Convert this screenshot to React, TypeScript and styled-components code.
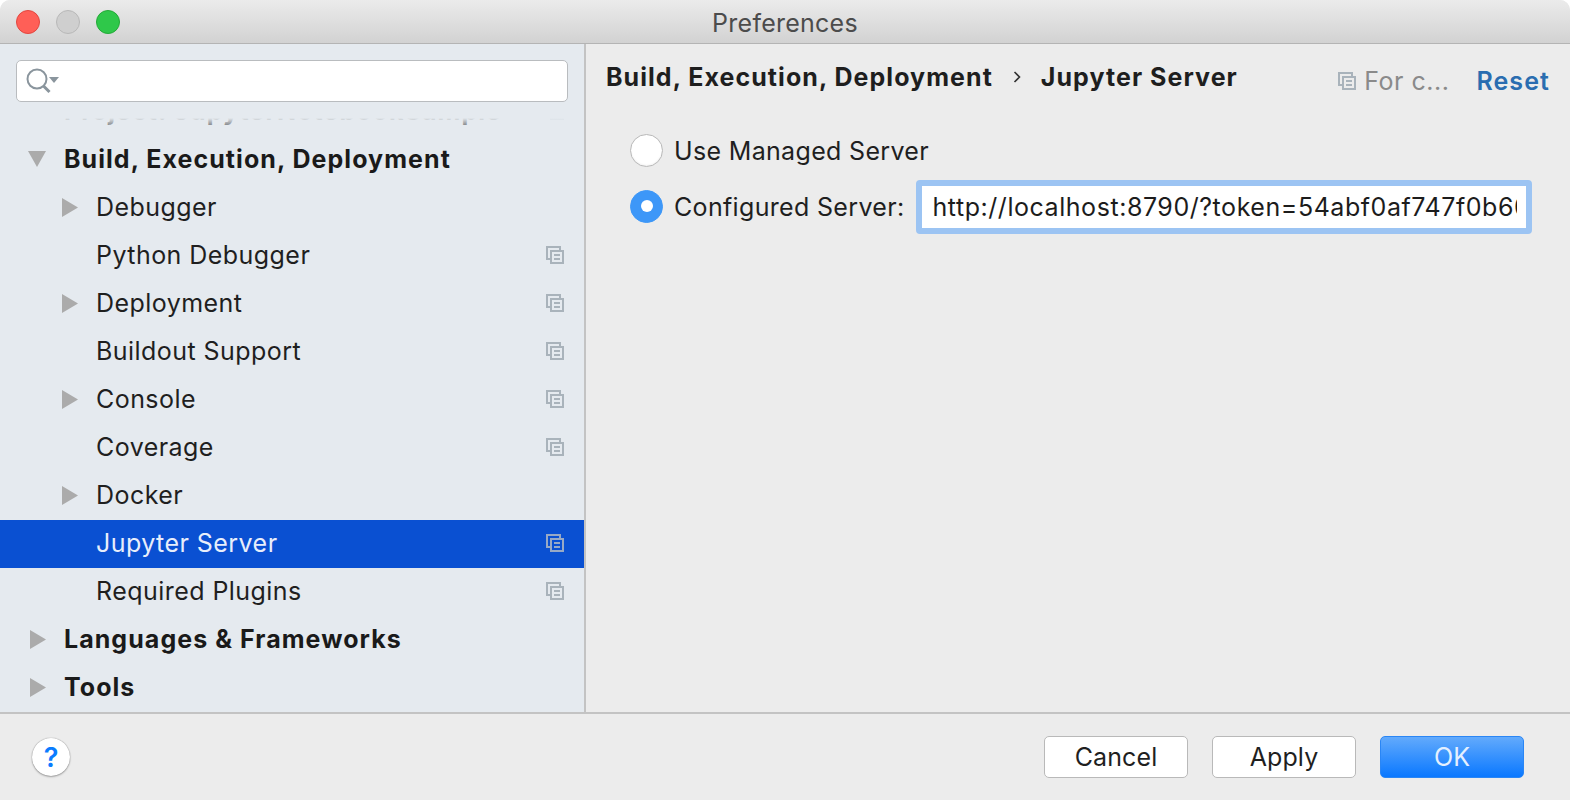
import React from "react";
import styled, { createGlobalStyle } from "styled-components";

const GlobalStyle = createGlobalStyle`
  html, body {
    margin: 0;
    padding: 0;
    background: #fff;
  }
  * {
    box-sizing: border-box;
  }
`;

const Window = styled.div`
  width: 1570px;
  height: 800px;
  display: flex;
  flex-direction: column;
  overflow: hidden;
  background: #ececec;
  border-radius: 10px 10px 0 0;
  color: #1c1c1c;
  font-family: Inter, "Liberation Sans", sans-serif;
`;

const TitleBar = styled.div`
  height: 44px;
  flex: none;
  display: flex;
  align-items: center;
  padding-left: 16px;
  gap: 16px;
  position: relative;
  background: linear-gradient(#ebebeb, #d2d2d2);
  border-bottom: 1px solid #b4b4b4;
`;

const Light = styled.span<{ $fill: string; $edge: string }>`
  width: 24px;
  height: 24px;
  margin-top: 1px;
  border-radius: 50%;
  background: ${(p) => p.$fill};
  border: 1px solid ${(p) => p.$edge};
`;

const Title = styled.div`
  position: absolute;
  left: 0;
  right: 0;
  top: 8px;
  text-align: center;
  font-size: 25px;
  line-height: 30px;
  letter-spacing: 0.25px;
  color: #4c4c4c;
`;

const Body = styled.div`
  flex: 1;
  min-height: 0;
  display: flex;
`;

const Sidebar = styled.div`
  width: 586px;
  flex: none;
  display: flex;
  flex-direction: column;
  background: #e5eaef;
  border-right: 2px solid #c3c3c3;
`;

const SearchWrap = styled.div`
  flex: none;
  height: 74px;
  padding: 16px 16px 0 16px;
`;

const SearchBox = styled.div`
  height: 42px;
  display: flex;
  align-items: center;
  padding-left: 9px;
  background: #fff;
  border: 1px solid #b9bcbf;
  border-radius: 5px;
`;

const Tree = styled.div`
  flex: 1;
  min-height: 0;
  overflow: hidden;
  position: relative;
`;

const TreeFade = styled.div`
  position: absolute;
  left: 0;
  right: 0;
  top: 0;
  height: 10px;
  background: linear-gradient(#e5eaef, rgba(229, 234, 239, 0.35));
`;

const TreeList = styled.div`
  margin-top: -30px;
`;

const Row = styled.div<{ $selected?: boolean; $level: number }>`
  height: 48px;
  display: flex;
  align-items: center;
  padding-left: ${(p) => (p.$level === 0 ? 30 : 62)}px;
  padding-right: 20px;
  padding-bottom: 2px;
  background: ${(p) => (p.$selected ? "#0a50d2" : "transparent")};
  color: ${(p) => (p.$selected ? "#e8eefb" : "#1f1f1f")};
`;

const ArrowSlot = styled.span<{ $down?: boolean }>`
  width: 34px;
  flex: none;
  display: flex;
  align-items: center;
  margin-left: ${(p) => (p.$down ? -2 : 0)}px;
  margin-right: ${(p) => (p.$down ? 2 : 0)}px;
`;

const RowLabel = styled.span<{ $bold?: boolean }>`
  flex: 1;
  font-size: 25px;
  line-height: 30px;
  letter-spacing: ${(p) => (p.$bold ? "1.05px" : "0.45px")};
  font-weight: ${(p) => (p.$bold ? 700 : 400)};
  color: ${(p) => (p.$bold ? "#1a1a1a" : "inherit")};
  white-space: nowrap;
`;

const Content = styled.div`
  flex: 1;
  min-width: 0;
  display: flex;
  flex-direction: column;
  padding: 0 20px 0 20px;
`;

const Header = styled.div`
  height: 74px;
  flex: none;
  display: flex;
  align-items: flex-start;
  padding-top: 18px;
`;

const Crumb = styled.span`
  font-size: 25px;
  line-height: 30px;
  font-weight: 700;
  letter-spacing: 1.05px;
  color: #1e1e1e;
  white-space: nowrap;
`;

const CrumbSep = styled.span`
  width: 48px;
  flex: none;
  display: flex;
  justify-content: center;
  padding-top: 9px;
`;

const HeaderSpacer = styled.div`
  flex: 1;
`;

const ScopeHint = styled.span`
  display: flex;
  align-items: center;
  gap: 8px;
  margin-top: 4px;
  font-size: 25px;
  line-height: 30px;
  letter-spacing: 0.5px;
  color: #8a8a8a;
  white-space: nowrap;
`;

const ResetLink = styled.span`
  margin-left: 27px;
  margin-top: 4px;
  font-size: 25px;
  line-height: 30px;
  font-weight: 600;
  letter-spacing: 1.1px;
  color: #2a6db0;
`;

const Options = styled.div`
  display: flex;
  flex-direction: column;
  padding-left: 24px;
  padding-top: 4px;
`;

const OptionRow = styled.div`
  height: 56px;
  display: flex;
  align-items: center;
  gap: 11px;
`;

const RadioCircle = styled.span<{ $checked?: boolean }>`
  width: 33px;
  height: 33px;
  flex: none;
  display: flex;
  align-items: center;
  justify-content: center;
  border-radius: 50%;
  background: ${(p) => (p.$checked ? "#3d97f8" : "#fff")};
  border: 1px solid ${(p) => (p.$checked ? "#3d97f8" : "#b8b8b8")};
  box-shadow: ${(p) => (p.$checked ? "none" : "inset 0 -1px 2px rgba(0,0,0,0.06)")};
`;

const RadioDot = styled.span`
  width: 12px;
  height: 12px;
  border-radius: 50%;
  background: #fff;
`;

const OptionLabel = styled.span`
  padding-top: 2px;
  font-size: 25px;
  line-height: 30px;
  letter-spacing: 0.33px;
  color: #1f1f1f;
  white-space: nowrap;
`;

const UrlField = styled.div`
  width: 616px;
  height: 54px;
  margin-top: 2px;
  margin-left: 1px;
  padding: 7px 9px 7px 10px;
  background: #fff;
  border: 6px solid #9cc4f3;
  border-radius: 4px;
  display: flex;
  align-items: center;
  overflow: hidden;
  font-size: 25px;
  line-height: 30px;
  letter-spacing: 0.55px;
  color: #1c1c1c;
  white-space: nowrap;
`;

const UrlClip = styled.div`
  overflow: hidden;
  width: 100%;
`;

const Footer = styled.div`
  height: 88px;
  flex: none;
  display: flex;
  align-items: center;
  padding: 0 46px 0 32px;
  background: #ececec;
  border-top: 2px solid #c3c3c3;
`;

const HelpButton = styled.div`
  width: 38px;
  height: 38px;
  display: flex;
  align-items: center;
  justify-content: center;
  border-radius: 50%;
  background: #fff;
  box-shadow: 0 0 1px rgba(0, 0, 0, 0.45), 0 1px 2px rgba(0, 0, 0, 0.3);
  color: #0a7cff;
  font-size: 27px;
  font-weight: 600;
`;

const FooterSpacer = styled.div`
  flex: 1;
`;

const Button = styled.div<{ $primary?: boolean }>`
  width: 144px;
  height: 42px;
  margin-left: 24px;
  display: flex;
  align-items: center;
  justify-content: center;
  border-radius: 5px;
  font-size: 25px;
  letter-spacing: 0.1px;
  background: ${(p) => (p.$primary ? "linear-gradient(#62aafc, #0a78ff)" : "#fff")};
  border: 1px solid ${(p) => (p.$primary ? "#2a86f5" : "#b9b9b9")};
  color: ${(p) => (p.$primary ? "#e4f0ff" : "#1f1f1f")};
`;

const TriangleRight = () => (
  <svg width="16" height="19" viewBox="0 0 16 19">
    <polygon points="0,0 16,9.5 0,19" fill="#ababab" />
  </svg>
);

const TriangleDown = () => (
  <svg width="18" height="16" viewBox="0 0 18 16">
    <polygon points="0,0 18,0 9,16" fill="#ababab" />
  </svg>
);

const CopyIcon = ({ color = "#a9b3bb" }: { color?: string }) => (
  <svg width="18" height="18" viewBox="0 0 18 18" fill="none" stroke={color} strokeWidth="2">
    <path d="M4 13H1V1h13v3" />
    <rect x="5" y="5" width="12" height="12" fill="none" />
    <path d="M8 9h6M8 13h6" />
  </svg>
);

const SearchIcon = () => (
  <svg width="34" height="26" viewBox="0 0 34 26" fill="none">
    <circle cx="11" cy="11" r="9.5" stroke="#8a959d" strokeWidth="2" />
    <path d="M17.5 18l6 6" stroke="#8a959d" strokeWidth="3" />
    <polygon points="23,9 33,9 28,15" fill="#8a959d" />
  </svg>
);

const Chevron = () => (
  <svg width="8" height="12" viewBox="0 0 8 12" fill="none">
    <path d="M1.5 1l5 5-5 5" stroke="#333" strokeWidth="1.6" />
  </svg>
);

type Item = {
  label: string;
  level: number;
  arrow?: "right" | "down";
  copy?: boolean;
  selected?: boolean;
};

const items: Item[] = [
  { label: "Project: JupyterNotebookSample", level: 0, copy: true },
  { label: "Build, Execution, Deployment", level: 0, arrow: "down" },
  { label: "Debugger", level: 1, arrow: "right" },
  { label: "Python Debugger", level: 1, copy: true },
  { label: "Deployment", level: 1, arrow: "right", copy: true },
  { label: "Buildout Support", level: 1, copy: true },
  { label: "Console", level: 1, arrow: "right", copy: true },
  { label: "Coverage", level: 1, copy: true },
  { label: "Docker", level: 1, arrow: "right" },
  { label: "Jupyter Server", level: 1, copy: true, selected: true },
  { label: "Required Plugins", level: 1, copy: true },
  { label: "Languages & Frameworks", level: 0, arrow: "right" },
  { label: "Tools", level: 0, arrow: "right" },
];

export default function App() {
  return (
    <Window>
      <GlobalStyle />
      <TitleBar>
        <Light $fill="#ff5f57" $edge="#e2463f" />
        <Light $fill="#cfcfcf" $edge="#b8b8b8" />
        <Light $fill="#2fc84a" $edge="#24a938" />
        <Title>Preferences</Title>
      </TitleBar>
      <Body>
        <Sidebar>
          <SearchWrap>
            <SearchBox>
              <SearchIcon />
            </SearchBox>
          </SearchWrap>
          <Tree>
            <TreeList>
              {items.map((item) => (
                <Row key={item.label} $level={item.level} $selected={item.selected}>
                  <ArrowSlot $down={item.arrow === "down"}>
                    {item.arrow === "right" && <TriangleRight />}
                    {item.arrow === "down" && <TriangleDown />}
                  </ArrowSlot>
                  <RowLabel $bold={item.level === 0}>{item.label}</RowLabel>
                  {item.copy && <CopyIcon color={item.selected ? "#97a9c6" : "#a9b3bb"} />}
                </Row>
              ))}
            </TreeList>
            <TreeFade />
          </Tree>
        </Sidebar>
        <Content>
          <Header>
            <Crumb>Build, Execution, Deployment</Crumb>
            <CrumbSep>
              <Chevron />
            </CrumbSep>
            <Crumb>Jupyter Server</Crumb>
            <HeaderSpacer />
            <ScopeHint>
              <CopyIcon />
              For c...
            </ScopeHint>
            <ResetLink>Reset</ResetLink>
          </Header>
          <Options>
            <OptionRow>
              <RadioCircle />
              <OptionLabel>Use Managed Server</OptionLabel>
            </OptionRow>
            <OptionRow>
              <RadioCircle $checked>
                <RadioDot />
              </RadioCircle>
              <OptionLabel>Configured Server:</OptionLabel>
              <UrlField>
                <UrlClip>http://localhost:8790/?token=54abf0af747f0b60</UrlClip>
              </UrlField>
            </OptionRow>
          </Options>
        </Content>
      </Body>
      <Footer>
        <HelpButton>?</HelpButton>
        <FooterSpacer />
        <Button>Cancel</Button>
        <Button>Apply</Button>
        <Button $primary>OK</Button>
      </Footer>
    </Window>
  );
}
